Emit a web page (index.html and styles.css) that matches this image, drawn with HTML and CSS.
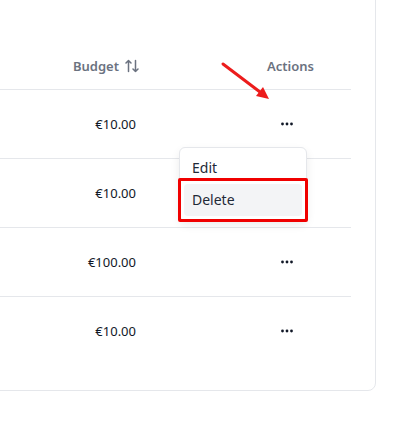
FILE: index.html
```html
<!DOCTYPE html>
<html lang="en">
<head>
  <meta charset="UTF-8" />
  <meta name="viewport" content="width=device-width, initial-scale=1.0"/>
  <title>Campaigns</title>
  <link rel="stylesheet" href="styles.css">
</head>
<body>
  <div class="page">
    <!-- Campaigns table card -->
    <div class="card">
      <table class="campaigns">
        <thead>
          <tr>
            <th class="col-name"></th>
            <th class="col-budget">
              <span class="sortable">Budget
                <svg class="sort-icon" width="14" height="14" viewBox="0 0 14 14" fill="none" stroke="currentColor" stroke-width="1.5" stroke-linecap="round" stroke-linejoin="round">
                  <path d="M3.5 12.5V1.5M1 4l2.5-2.5L6 4"/>
                  <path d="M10.5 1.5v11M8 10l2.5 2.5L13 10"/>
                </svg>
              </span>
            </th>
            <th class="col-spacer"></th>
            <th class="col-actions">Actions</th>
          </tr>
        </thead>
        <tbody>
          <tr>
            <td></td>
            <td class="col-budget">€10.00</td>
            <td></td>
            <td class="col-actions">
              <div class="actions-cell">
                <button class="more-btn" aria-label="More">
                  <svg width="12" height="4" viewBox="0 0 12 4" fill="currentColor"><circle cx="1.5" cy="2" r="1.4"/><circle cx="6" cy="2" r="1.4"/><circle cx="10.5" cy="2" r="1.4"/></svg>
                </button>
                <div class="menu">
                  <div class="menu-item">Edit</div>
                  <div class="menu-item active">Delete</div>
                  <div class="highlight"></div>
                </div>
              </div>
            </td>
          </tr>
          <tr>
            <td></td>
            <td class="col-budget">€10.00</td>
            <td></td>
            <td class="col-actions"></td>
          </tr>
          <tr>
            <td></td>
            <td class="col-budget">€100.00</td>
            <td></td>
            <td class="col-actions">
              <div class="actions-cell">
                <button class="more-btn" aria-label="More">
                  <svg width="12" height="4" viewBox="0 0 12 4" fill="currentColor"><circle cx="1.5" cy="2" r="1.4"/><circle cx="6" cy="2" r="1.4"/><circle cx="10.5" cy="2" r="1.4"/></svg>
                </button>
              </div>
            </td>
          </tr>
          <tr>
            <td></td>
            <td class="col-budget">€10.00</td>
            <td></td>
            <td class="col-actions">
              <div class="actions-cell">
                <button class="more-btn" aria-label="More">
                  <svg width="12" height="4" viewBox="0 0 12 4" fill="currentColor"><circle cx="1.5" cy="2" r="1.4"/><circle cx="6" cy="2" r="1.4"/><circle cx="10.5" cy="2" r="1.4"/></svg>
                </button>
              </div>
            </td>
          </tr>
        </tbody>
      </table>
    </div>

    <!-- annotation arrow -->
    <svg class="annotation" width="395" height="431" viewBox="0 0 395 431">
      <line x1="223" y1="84" x2="260" y2="112" stroke="#ec1c1c" stroke-width="3" stroke-linecap="round"/>
      <polygon points="269,119 256,116 263,107" fill="#ec1c1c"/>
    </svg>
  </div>
</body>
</html>
```

FILE: styles.css
```css
body {
  margin: 0;
  font-family: "Segoe UI", "Noto Sans", Arial, sans-serif;
  font-size: 13px;
  color: #111827;
  background: #fff;
  overflow: hidden;
}

.page {
  position: relative;
  width: 395px;
  height: 431px;
}

.card {
  box-sizing: border-box;
  margin: -20px 0 0 -100px;
  width: 476px;
  padding: 61px 24px 25px 24px;
  border: 1px solid #e5e7eb;
  border-radius: 8px;
  background: #fff;
}

.campaigns {
  width: 100%;
  border-collapse: collapse;
  table-layout: fixed;
}

.campaigns th {
  height: 47px;
  font-weight: 600;
  color: #6b7280;
  padding: 0;
  border-bottom: 1px solid #e5e7eb;
}

.campaigns td {
  height: 68px;
  padding: 0;
  border-bottom: 1px solid #e5e7eb;
}

.campaigns tbody tr:last-child td {
  border-bottom: none;
}

.col-budget {
  width: 100px;
  text-align: right;
}

td.col-budget {
  padding-right: 3px !important;
}

.col-spacer {
  width: 91px;
}

.col-actions {
  width: 121px;
  text-align: center;
}

.sortable {
  display: inline-flex;
  align-items: center;
  gap: 6px;
}

.sort-icon {
  margin-top: 1px;
}

.actions-cell {
  position: relative;
  display: flex;
  justify-content: center;
  padding-right: 7px;
}

.more-btn {
  display: flex;
  align-items: center;
  justify-content: center;
  width: 24px;
  height: 24px;
  padding: 0;
  border: none;
  background: none;
  color: #111827;
  cursor: pointer;
}

.menu {
  position: absolute;
  top: 35px;
  left: -51px;
  width: 128px;
  box-sizing: border-box;
  padding: 4px;
  background: #fff;
  border: 1px solid #e5e7eb;
  border-radius: 6px;
  box-shadow: 0 4px 10px rgba(0, 0, 0, 0.08);
  text-align: left;
  z-index: 2;
}

.menu-item {
  height: 32px;
  line-height: 32px;
  padding: 0 8px;
  border-radius: 4px;
  font-size: 14px;
  color: #1f2937;
}

.menu-item.active {
  background: #f3f4f6;
}

.highlight {
  position: absolute;
  left: -2px;
  right: -2px;
  top: 30px;
  bottom: -2px;
  border: 3px solid #f00000;
  border-radius: 2px;
}

.annotation {
  position: absolute;
  top: 0;
  left: 0;
  pointer-events: none;
}
```
